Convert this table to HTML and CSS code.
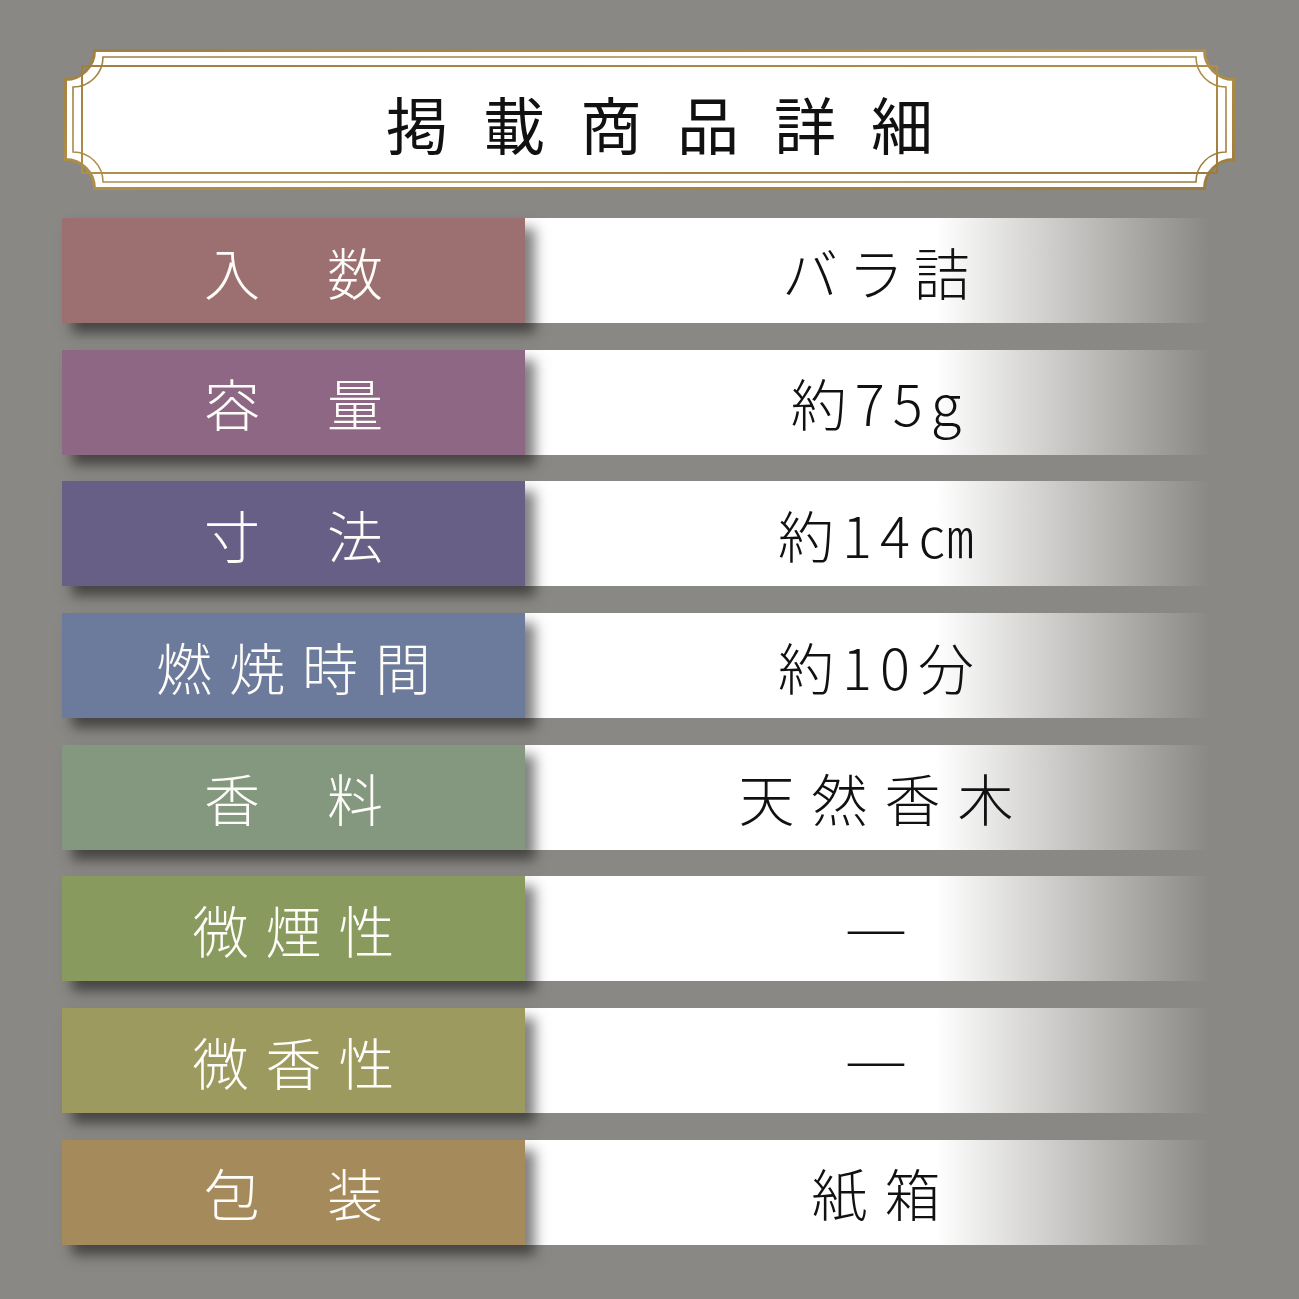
FILE: index.html
```html
<!DOCTYPE html>
<html lang="ja">
<head>
<meta charset="utf-8">
<title>掲載商品詳細</title>
<link rel="stylesheet" href="styles.css">
</head>
<body>
<div class="page">
  <header class="title-box">
    <svg class="frame" viewBox="0 0 1171 141" width="1171" height="141" aria-hidden="true">
      <defs>
        <linearGradient id="gold" x1="0" y1="0" x2="1" y2="1">
          <stop offset="0" stop-color="#a07f42"/>
          <stop offset="0.5" stop-color="#b08f4a"/>
          <stop offset="1" stop-color="#9c7b3e"/>
        </linearGradient>
      </defs>
      <path d="M30.5 1.5 H1140.5 A29 29 0 0 0 1169.5 30.5 V110.5 A29 29 0 0 0 1140.5 139.5 H30.5 A29 29 0 0 0 1.5 110.5 V30.5 A29 29 0 0 0 30.5 1.5 Z" fill="#ffffff" stroke="url(#gold)" stroke-width="3"/>
      <path d="M39 8 H1132 A30 30 0 0 0 1162 38 V103 A30 30 0 0 0 1132 133 H39 A30 30 0 0 0 9 103 V38 A30 30 0 0 0 39 8 Z" fill="none" stroke="url(#gold)" stroke-width="1.6"/>
      <rect x="18" y="17" width="1135" height="107" fill="none" stroke="url(#gold)" stroke-width="2"/>
    </svg>
    <h1 class="title"><span class="title-text">掲載商品詳細</span></h1>
  </header>

  <div class="spec">
    <div class="row">
      <div class="label c1 wide">入数</div>
      <div class="value tight">バラ詰</div>
    </div>
    <div class="row">
      <div class="label c2 wide">容量</div>
      <div class="value num">約75g</div>
    </div>
    <div class="row">
      <div class="label c3 wide">寸法</div>
      <div class="value num">約14㎝</div>
    </div>
    <div class="row">
      <div class="label c4">燃焼時間</div>
      <div class="value num">約10分</div>
    </div>
    <div class="row">
      <div class="label c5 wide">香料</div>
      <div class="value">天然香木</div>
    </div>
    <div class="row">
      <div class="label c6">微煙性</div>
      <div class="value dash">―</div>
    </div>
    <div class="row">
      <div class="label c7">微香性</div>
      <div class="value dash">―</div>
    </div>
    <div class="row">
      <div class="label c8 wide">包装</div>
      <div class="value">紙箱</div>
    </div>
  </div>
</div>
</body>
</html>
```

FILE: styles.css
```css
html, body {
  margin: 0;
  padding: 0;
}

body {
  background: #8a8884;
  font-family: "Noto Sans CJK JP", "Noto Sans", sans-serif;
  width: 1299px;
  height: 1299px;
  overflow: hidden;
}

.page {
  padding-top: 49px;
}

.title-box {
  position: relative;
  margin-left: 64px;
  width: 1171px;
  height: 141px;
  display: flex;
  align-items: center;
  justify-content: center;
}

.frame {
  position: absolute;
  left: 0;
  top: 0;
  display: block;
}

.title {
  position: relative;
  margin: 0;
  padding: 6px 0 0 20px;
  font-size: 62px;
  font-weight: 400;
  line-height: 1;
  color: #111;
  white-space: nowrap;
  flex: none;
}

.title-text {
  letter-spacing: 35px;
  margin-right: -35px;
}

.spec {
  margin-top: 28px;
  margin-left: 62px;
  display: flex;
  flex-direction: column;
  gap: 26.7px;
}

.row {
  display: flex;
  height: 105px;
}

.label {
  position: relative;
  z-index: 1;
  width: 463px;
  flex: none;
  display: flex;
  align-items: center;
  justify-content: center;
  box-sizing: border-box;
  padding-left: 17px;
  color: #fdfcf8;
  font-size: 56px;
  font-weight: 300;
  letter-spacing: 17px;
  line-height: 1;
  white-space: nowrap;
  box-shadow: 10px 10px 12px rgba(0, 0, 0, 0.5);
}

.label.wide {
  letter-spacing: 67px;
  padding-left: 67px;
}

.c1 { background: #9c6f70; }
.c2 { background: #8d6783; }
.c3 { background: #675f86; }
.c4 { background: #6c7b9b; }
.c5 { background: #84977f; }
.c6 { background: #889a5d; }
.c7 { background: #9d9a60; }
.c8 { background: #a58a5c; }

.value {
  width: 685px;
  flex: none;
  display: flex;
  align-items: center;
  justify-content: center;
  box-sizing: border-box;
  padding-left: 34px;
  background: linear-gradient(to right, #ffffff 0%, #ffffff 60%, #8a8884 100%);
  color: #111;
  font-size: 56px;
  font-weight: 300;
  letter-spacing: 17px;
  line-height: 1;
  white-space: nowrap;
}

.value.tight {
  letter-spacing: 10px;
  padding-left: 27px;
}

.value.num {
  letter-spacing: 8px;
  padding-left: 25px;
}

.value.dash {
  font-size: 66px;
  letter-spacing: 0;
  padding-left: 17px;
}
```
